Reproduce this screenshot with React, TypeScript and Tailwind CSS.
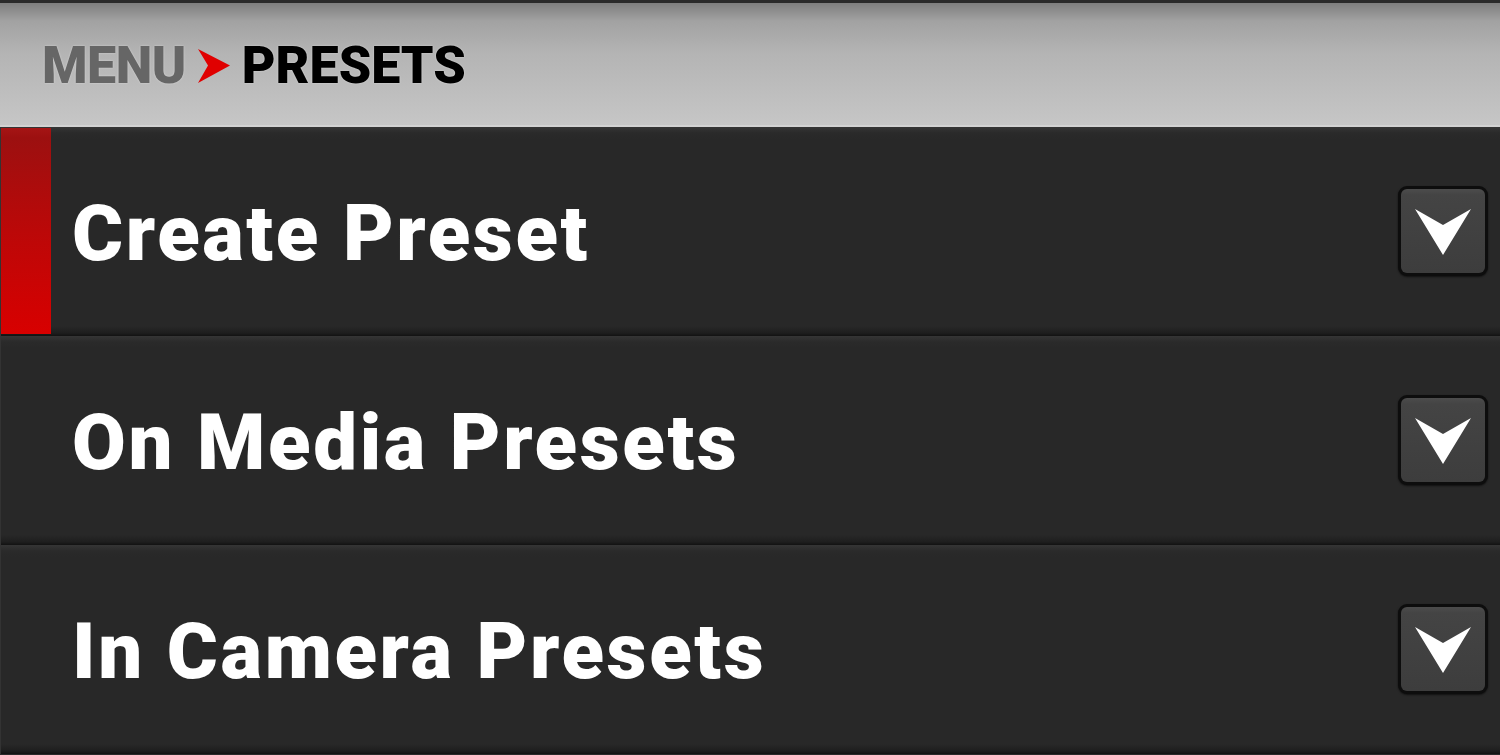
import React from 'react';

const rows = ['Create Preset', 'On Media Presets', 'In Camera Presets'];

const ChevronButton: React.FC = () => (
  <div className="w-[90px] h-[90px] rounded-[9px] bg-[#0d0d0d] p-[3px] shadow-[0_1px_2px_rgba(0,0,0,0.6)]">
    <div className="w-full h-full rounded-[6px] bg-[linear-gradient(to_bottom,#4c4c4c_0px,#444444_6px,#3d3d3d_100%)] flex items-center justify-center">
      <svg width="58" height="50" viewBox="0 0 58 50" className="mt-[2px]">
        <path d="M1 2 L29 18 L57 2 L29 48 Z" fill="#ffffff" />
      </svg>
    </div>
  </div>
);

const App: React.FC = () => {
  return (
    <div className="w-[1500px] h-[755px] overflow-hidden flex flex-col bg-[#1a1a1a] font-['Roboto','Liberation_Sans',sans-serif]">
      {/* Header */}
      <div className="h-[127px] shrink-0 border-t-[3px] border-[#2a2a2a] border-b-2 border-b-[#d2d2d2] bg-[linear-gradient(to_bottom,#7e7e7e_0px,#a2a2a2_18px,#b4b4b4_50px,#c6c6c6_100%)] flex items-center pl-[42px] pt-[4px]">
        <span className="text-[52px] leading-none font-black text-[#666666] tracking-[-0.5px] [text-shadow:0_0_2px_rgba(255,255,255,0.5)]">MENU</span>
        <svg width="34" height="36" viewBox="0 0 34 36" className="ml-[11px] mr-[11px]">
          <path d="M1 1 L33 17.5 L1 35 L11 17.5 Z" fill="#e00000" />
        </svg>
        <span className="text-[52px] leading-none font-black text-black tracking-[0px] [text-shadow:0_0_2px_rgba(255,255,255,0.5)]">PRESETS</span>
      </div>

      {/* Rows */}
      {rows.map((label, i) => (
        <div
          key={label}
          className="h-[209px] shrink-0 flex items-stretch bg-[linear-gradient(to_bottom,#353535_0px,#2a2a2a_6px,#282828_12px,#282828_calc(100%-10px),#1e1e1e_calc(100%-3px),#121212_100%)] border-l border-[#333333]"
        >
          <div
            className={
              i === 0
                ? 'w-[50px] shrink-0 my-[1px] mb-[2px] bg-[linear-gradient(to_bottom,#a51515_0px,#9c1010_10px,#bb0808_50%,#d80000_100%)]'
                : 'w-[50px] shrink-0'
            }
          />
          <div className="flex-1 flex items-center pl-[21px] pr-[12px] pb-[2px]">
            <span className="flex-1 text-white font-black text-[78px] leading-none tracking-[2.6px] pt-[6px]">{label}</span>
            <ChevronButton />
          </div>
        </div>
      ))}
      <div className="flex-1 bg-[#2a2a2a]" />
    </div>
  );
};

export default App;
